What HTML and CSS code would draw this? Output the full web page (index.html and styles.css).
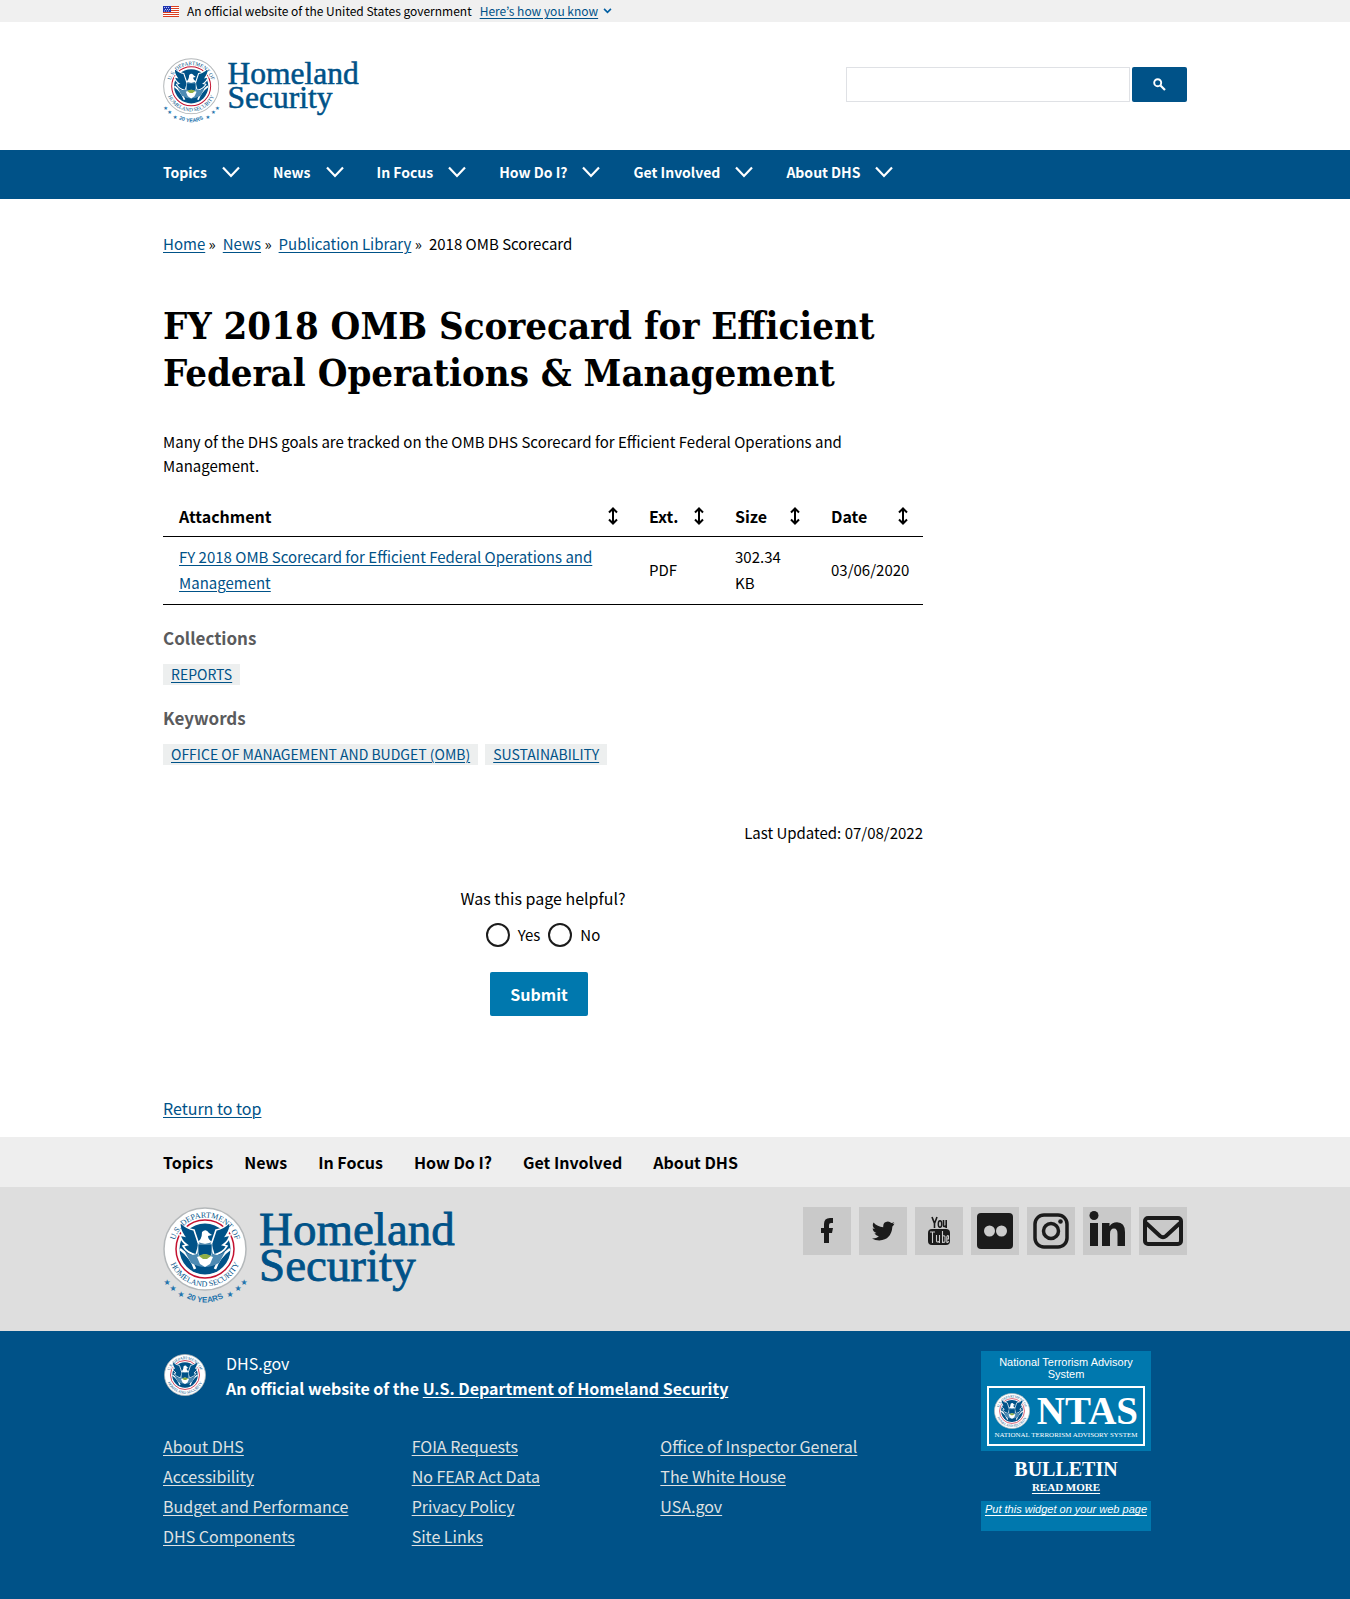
FILE: index.html
```html
<!DOCTYPE html>
<html lang="en">
<head>
<meta charset="utf-8">
<meta name="viewport" content="width=device-width, initial-scale=1">
<title>FY 2018 OMB Scorecard for Efficient Federal Operations &amp; Management | Homeland Security</title>
<link rel="stylesheet" href="styles.css">
</head>
<body id="top">
<svg class="defs" aria-hidden="true">
  <defs>
    <path id="arc-top" d="M10.500 42A31.500 31.500 0 0 1 73.500 42"/>
    <path id="arc-bottom" d="M4.500 42A37.500 37.500 0 0 0 79.500 42"/>
    <path id="arc-years" d="M14 85Q42 106 70 85"/>
    <symbol id="seal" viewBox="0 0 84 84">
      <circle cx="42" cy="42" r="41" fill="#fff" stroke="#b4b8ba" stroke-width="1.500"/>
      <circle cx="42" cy="42" r="29" fill="#fff" stroke="#c41230" stroke-width="1.500"/>
      <circle cx="42" cy="42" r="25.500" fill="#005288"/>
      <path d="M17 15Q24 22 31 23L36 38 33 48Q24 46 20 39L24 38Q18 34 17 28L21 29Q16 22 17 15ZM67 15Q60 22 53 23L48 38 51 48Q60 46 64 39L60 38Q66 34 67 28L63 29Q68 22 67 15Z" fill="#005288" stroke="#fff" stroke-width="1.600"/>
      <path d="M17 42Q28 50 32 62M67 42Q56 50 52 62" fill="none" stroke="#fff" stroke-width="2.500"/>
      <path d="M22 45Q31 51 36 45L48 45Q53 51 62 45L56 56Q49 60 42 60 35 60 28 56Z" fill="#4d8ab3"/>
      <path d="M39 25Q43 21 46 26L49 28 45 29Q45 33 50 35L42 37 34 35Q39 33 39 25Z" fill="#fff"/>
      <path d="M35 37H49V46Q48 51 42 53 36 51 35 46Z" fill="#005288" stroke="#bcd5e3" stroke-width=".8"/>
      <path d="M34 50L42 47 50 50 47 57 42 60 37 57Z" fill="#fff"/>
      <path d="M36 49Q42 45 48 49L44 52H40Z" fill="#8fae45"/>
      <path d="M31 58Q42 65 53 58L42 67Z" fill="#005288"/>
      <g class="seal-text">
        <text><textPath href="#arc-top" startOffset="50%">U.S. DEPARTMENT OF</textPath></text>
        <text><textPath href="#arc-bottom" startOffset="50%">HOMELAND SECURITY</textPath></text>
      </g>
    </symbol>
    <symbol id="dhs-logo" viewBox="0 0 292 98">
      <use href="#seal" width="84" height="84"/>
      <g class="wordmark"><text x="96" y="38">Homeland</text><text x="96" y="74">Security</text></g>
      <g class="stars"><text x="4" y="78">★</text><text x="10" y="84">★</text><text x="18" y="90">★</text><text x="67" y="90">★</text><text x="75" y="84">★</text><text x="81" y="78">★</text></g>
      <text class="years"><textPath href="#arc-years" startOffset="50%">20 YEARS</textPath></text>
    </symbol>
    <symbol id="chevron" viewBox="0 0 18 12"><path d="M1 1.500L9 10L17 1.500" fill="none" stroke="currentColor" stroke-width="2.200"/></symbol>
    <symbol id="sort" viewBox="0 0 10 18"><path d="M5 2V16M1 5.500L5 1.500L9 5.500M1 12.500L5 16.500L9 12.500" fill="none" stroke="currentColor" stroke-width="2"/></symbol>
  </defs>
</svg>

<div class="banner">
  <div class="container banner-inner">
    <svg class="flag" viewBox="0 0 16 11" aria-hidden="true"><path fill="#fff" d="M0 0h16v11H0z"/><path stroke="#db3e1f" d="M0 .5h16M0 2.500h16M0 4.500h16M0 6.500h16M0 8.500h16M0 10.500h16"/><path fill="#1e33b1" d="M0 0h8v6H0z"/><path stroke="#fff" stroke-dasharray="1 1" d="M1 1.500h6M2 3.500h6M1 5h6" stroke-width=".7"/></svg>
    <span>An official website of the United States government</span>
    <a href="#top">Here’s how you know</a>
    <svg class="banner-caret" viewBox="0 0 10 7" aria-hidden="true"><path d="M1 1l4 4 4-4" fill="none" stroke="#005ea2" stroke-width="1.900"/></svg>
  </div>
</div>

<header class="container header">
  <a href="#top" aria-label="U.S. Department of Homeland Security"><svg class="logo" viewBox="0 0 292 98"><use href="#dhs-logo"/></svg></a>
  <form class="search" role="search">
    <input type="search" aria-label="Search">
    <button type="button" aria-label="Search"><svg viewBox="0 0 13 13"><circle cx="4.700" cy="4.700" r="3.500" fill="none" stroke="#fff" stroke-width="1.900"/><path d="M7.500 7.500L12 12" stroke="#fff" stroke-width="2.200"/></svg></button>
  </form>
</header>

<nav class="main-nav" aria-label="Main">
  <div class="container main-nav-inner">
    <button type="button">Topics <svg><use href="#chevron"/></svg></button>
    <button type="button">News <svg><use href="#chevron"/></svg></button>
    <button type="button">In Focus <svg><use href="#chevron"/></svg></button>
    <button type="button">How Do I? <svg><use href="#chevron"/></svg></button>
    <button type="button">Get Involved <svg><use href="#chevron"/></svg></button>
    <button type="button">About DHS <svg><use href="#chevron"/></svg></button>
  </div>
</nav>

<div class="container page">
  <nav class="breadcrumb" aria-label="Breadcrumb">
    <ol>
      <li><a href="#top">Home</a> »</li>
      <li><a href="#top">News</a> »</li>
      <li><a href="#top">Publication Library</a> »</li>
      <li>2018 OMB Scorecard</li>
    </ol>
  </nav>

  <main class="main">
    <h1>FY 2018 OMB Scorecard for Efficient Federal Operations &amp; Management</h1>
    <p class="intro">Many of the DHS goals are tracked on the OMB DHS Scorecard for Efficient Federal Operations and Management.</p>
    <table class="files">
      <colgroup><col class="col-file"><col class="col-ext"><col class="col-size"><col class="col-date"></colgroup>
      <thead>
        <tr>
          <th scope="col"><div>Attachment <svg><use href="#sort"/></svg></div></th>
          <th scope="col"><div>Ext. <svg><use href="#sort"/></svg></div></th>
          <th scope="col"><div>Size <svg><use href="#sort"/></svg></div></th>
          <th scope="col"><div>Date <svg><use href="#sort"/></svg></div></th>
        </tr>
      </thead>
      <tbody>
        <tr>
          <td><a href="#top">FY 2018 OMB Scorecard for Efficient Federal Operations and Management</a></td>
          <td>PDF</td>
          <td>302.34 KB</td>
          <td>03/06/2020</td>
        </tr>
      </tbody>
    </table>
    <section class="tags">
      <h2>Collections</h2>
      <ul><li><a href="#top">REPORTS</a></li></ul>
    </section>
    <section class="tags">
      <h2>Keywords</h2>
      <ul><li><a href="#top">OFFICE OF MANAGEMENT AND BUDGET (OMB)</a></li><li><a href="#top">SUSTAINABILITY</a></li></ul>
    </section>
    <p class="updated">Last Updated: 07/08/2022</p>
    <form class="feedback">
      <fieldset>
        <legend>Was this page helpful?</legend>
        <div class="choices">
          <label><input type="radio" name="helpful"> Yes</label>
          <label><input type="radio" name="helpful"> No</label>
        </div>
      </fieldset>
      <button type="button">Submit</button>
    </form>
  </main>
  <a class="return" href="#top">Return to top</a>
</div>

<footer>
  <nav class="footer-nav" aria-label="Footer">
    <div class="container footer-nav-inner">
      <a href="#top">Topics</a><a href="#top">News</a><a href="#top">In Focus</a><a href="#top">How Do I?</a><a href="#top">Get Involved</a><a href="#top">About DHS</a>
    </div>
  </nav>
  <div class="footer-brand">
    <div class="container footer-brand-inner">
      <svg class="logo logo-large" viewBox="0 0 292 98" role="img" aria-label="U.S. Department of Homeland Security"><use href="#dhs-logo"/></svg>
      <div class="social">
        <a href="#top" aria-label="Facebook"><svg viewBox="0 0 48 48"><path d="M21 36V26h-3v-5h3v-4q0-6 6-6h3v5h-2q-2 0-2 2v3h4l-1 5h-3v10z"/></svg></a>
        <a href="#top" aria-label="Twitter"><svg viewBox="0 0 48 48"><path d="M35.500 16.500q-1 .5-2 .6 1.200-.8 1.700-2.200-1.300.8-2.800 1.100-1.500-1.500-3.500-1.500-4.600.3-4.700 4.700v1q-5.700-.3-9.700-4.700-2 3.800 1.400 6.400-1.200 0-2.200-.6.100 3.700 3.800 4.700-1 .3-2.100.1 1.200 3 4.500 3.300-3 2.300-7 2 3.300 2 7.500 2 12-.5 13-13.800 1.200-1 2.100-3.100z"/></svg></a>
        <a href="#top" aria-label="YouTube"><svg viewBox="0 0 48 48"><path d="M17 10l2.500 6.500V21M22 10l-2.500 6.500M28.500 13v5.500q0 1.700 2.200.5M31.200 13v8" fill="none" stroke="#1b1b1b" stroke-width="1.600"/><ellipse cx="25" cy="17" rx="1.700" ry="3.300" fill="none" stroke="#1b1b1b" stroke-width="1.500"/><rect x="13" y="22" width="22" height="16" rx="4"/><path d="M15 25h5M17.500 25v11M21.500 28v6q.5 2 3 .2V28M24.500 28v8M27.500 24v12M27.500 29q3-1 2.500 2v3q0 2-2.500 1M33.500 34q-.5 2-1.700 1.200V30q.5-2 1.700-1v3h-1.700" fill="none" stroke="#ccc" stroke-width="1.100"/></svg></a>
        <a href="#top" aria-label="Flickr"><svg viewBox="0 0 48 48"><rect x="6" y="6" width="36" height="36" rx="4"/><circle cx="18.500" cy="24" r="5.500" fill="#ccc"/><circle cx="30.500" cy="24" r="5.500" fill="#ccc"/></svg></a>
        <a href="#top" aria-label="Instagram"><svg viewBox="0 0 48 48"><rect x="8" y="8" width="32" height="32" rx="9" fill="none" stroke="#1b1b1b" stroke-width="3.500"/><circle cx="24" cy="24" r="7.500" fill="none" stroke="#1b1b1b" stroke-width="3.500"/><circle cx="33.500" cy="14.500" r="2.300"/></svg></a>
        <a href="#top" aria-label="LinkedIn"><svg viewBox="0 0 48 48"><circle cx="11" cy="8.500" r="4.500"/><path d="M7 16h8v23H7zM19 16h7.500v3.200q2.500-3.900 7.500-3.900 8 0 8 10V39H34.500V27q0-5.500-3.500-5.500-4 0-4 5.500v12h-8z"/></svg></a>
        <a href="#top" aria-label="Email"><svg viewBox="0 0 48 48"><rect x="6" y="11" width="36" height="26" rx="3" fill="none" stroke="#1b1b1b" stroke-width="4"/><path d="M7 16L21 29q3 2.500 6 0L41 16" fill="none" stroke="#1b1b1b" stroke-width="4"/></svg></a>
      </div>
    </div>
  </div>
  <div class="footer-base">
    <div class="container footer-base-inner">
      <div class="footer-info">
        <div class="identity">
          <svg class="seal-small" viewBox="0 0 84 84" aria-hidden="true"><use href="#seal"/></svg>
          <p>DHS.gov<br><strong>An official website of the <a href="#top">U.S. Department of Homeland Security</a></strong></p>
        </div>
        <div class="links">
          <ul>
            <li><a href="#top">About DHS</a></li><li><a href="#top">Accessibility</a></li><li><a href="#top">Budget and Performance</a></li><li><a href="#top">DHS Components</a></li>
          </ul>
          <ul>
            <li><a href="#top">FOIA Requests</a></li><li><a href="#top">No FEAR Act Data</a></li><li><a href="#top">Privacy Policy</a></li><li><a href="#top">Site Links</a></li>
          </ul>
          <ul>
            <li><a href="#top">Office of Inspector General</a></li><li><a href="#top">The White House</a></li><li><a href="#top">USA.gov</a></li>
          </ul>
        </div>
      </div>
      <aside class="ntas">
        <div class="ntas-head">
          <p>National Terrorism Advisory System</p>
          <div class="ntas-box">
            <div class="ntas-title"><svg viewBox="0 0 84 84" aria-hidden="true"><use href="#seal"/></svg><span>NTAS</span></div>
            <div class="ntas-caption">NATIONAL TERRORISM ADVISORY SYSTEM</div>
          </div>
        </div>
        <div class="ntas-bulletin">
          <strong>BULLETIN</strong>
          <a href="#top">READ MORE</a>
        </div>
        <a class="ntas-foot" href="#top">Put this widget on your web page</a>
      </aside>
    </div>
  </div>
</footer>
</body>
</html>
```
FILE: styles.css
```css
* { box-sizing: border-box; }
body {
  margin: 0;
  background: #fff;
  color: #000;
  font: 16px/26px "Noto Sans CJK KR", "Noto Sans", sans-serif;
}
a { color: #005288; text-underline-offset: 2px; text-decoration-thickness: 1px; }
button, input { font: inherit; }
h1, h2, p, ul, ol { margin: 0; padding: 0; }
ul, ol { list-style: none; }
svg { display: block; flex: none; }
.defs { position: absolute; width: 0; height: 0; }
.container { max-width: 1088px; margin: 0 auto; padding: 0 32px; }

.seal-text { font: 8px "Liberation Serif", serif; fill: #005288; text-anchor: middle; }
.wordmark { font: 47px "Liberation Serif", serif; fill: #005288; stroke: #005288; stroke-width: 0.8px; }
.stars { font: 8px "DejaVu Sans", sans-serif; fill: #2474ad; text-anchor: middle; }
.years { font: bold 8px "Liberation Sans", sans-serif; fill: #2474ad; text-anchor: middle; }

.banner { background: #f0f0f0; }
.banner-inner { display: flex; align-items: center; gap: 8px; font-size: 12px; line-height: 22px; }
.banner-caret { width: 9px; height: 6px; margin-left: -3px; }
.flag { width: 16px; height: 11px; }

.header { display: flex; justify-content: space-between; align-items: flex-start; padding-top: 36px; padding-bottom: 26px; }
.logo { width: 196px; height: 66px; }
.search { display: flex; gap: 2px; padding-top: 9px; }
.search input { width: 284px; height: 35px; padding: 0 8px; border: 1px solid #dfe1e5; border-radius: 0; }
.search button { width: 55px; height: 35px; padding: 0; border: 0; border-radius: 2px; background: #005288; }
.search button svg { width: 13px; height: 13px; margin: 0 auto; }

.main-nav { background: #005288; }
.main-nav-inner { display: flex; gap: 33px; }
.main-nav button {
  display: flex;
  align-items: center;
  gap: 15px;
  padding: 9px 0 14px;
  border: 0;
  background: none;
  color: #fff;
  font-size: 14px;
  font-weight: bold;
}
.main-nav svg { width: 18px; height: 12px; }

.page { padding-top: 32px; padding-bottom: 16px; }
.breadcrumb ol { display: flex; gap: 7px; font-size: 15px; }
.main { max-width: 760px; padding-top: 45px; }
h1 { font: bold 38px/47px "DejaVu Serif Condensed", "DejaVu Serif", serif; }
.intro { padding: 34px 0 17px; font-size: 15px; line-height: 24px; }

.files { width: 100%; border-collapse: collapse; table-layout: fixed; text-align: left; }
.files th { padding: 8px 15px 7px 16px; border-bottom: 1px solid #000; }
.files td { padding: 7px 15px 8px 16px; border-bottom: 1px solid #000; font-size: 15px; }
.files th div { display: flex; align-items: center; justify-content: space-between; }
.files svg { width: 10px; height: 18px; }
.col-ext { width: 86px; }
.col-size { width: 96px; }
.col-date { width: 108px; }

.tags { padding-top: 20px; }
.tags h2 { color: #5a5b5d; font-size: 17px; line-height: 26px; }
.tags ul { display: flex; gap: 7px; padding-top: 13px; }
.tags li { padding: 0 8px; background: #edefef; font-size: 14px; line-height: 21px; }

.updated { padding-top: 55px; text-align: right; font-size: 15px; }
.feedback { display: flex; flex-direction: column; align-items: center; padding-top: 39px; }
.feedback fieldset { margin: 0; padding: 0; border: 0; }
.feedback legend { padding: 0; }
.choices { display: flex; justify-content: center; gap: 8px; padding-top: 11px; font-size: 15px; }
.choices label { display: flex; align-items: center; gap: 8px; }
.choices input { appearance: none; width: 24px; height: 24px; margin: 0; border: 2px solid #1b1b1b; border-radius: 50%; background: #fff; }
.feedback button { margin: 24px 8px 0 0; padding: 9px 20px; border: 0; border-radius: 2px; background: #0078ae; color: #fff; font-weight: bold; }
.return { display: inline-block; margin-top: 79px; }

.footer-nav { background: #eee; }
.footer-nav-inner { display: flex; gap: 31px; padding-top: 12px; padding-bottom: 12px; }
.footer-nav a { color: #000; font-weight: bold; text-decoration: none; }
.footer-brand { background: #dedede; }
.footer-brand-inner { display: flex; justify-content: space-between; align-items: flex-start; padding-top: 20px; padding-bottom: 26px; }
.logo-large { width: 292px; height: 98px; }
.social { display: flex; gap: 8px; }
.social a { display: block; background: #c9c9c9; }
.social svg { width: 48px; height: 48px; fill: #1b1b1b; }

.footer-base { background: #005288; color: #fff; }
.footer-base a { color: inherit; }
.footer-base-inner { display: flex; justify-content: space-between; padding-top: 20px; padding-bottom: 48px; }
.footer-info { flex: 1; max-width: 746px; }
.identity { display: flex; gap: 19px; line-height: 25px; }
.seal-small { width: 44px; height: 44px; margin-top: 2px; padding: 1px; }
.links { display: grid; grid-template-columns: repeat(3, 1fr); padding-top: 30px; line-height: 30px; }
.footer-base .links a { color: #dfe1e2; }

.ntas { width: 170px; margin-right: 36px; text-align: center; font: 11px/12px "Liberation Sans", Arial, sans-serif; }
.ntas-head { padding: 5px 6px; background: #0078ae; }
.ntas-head p { padding: 0 6px; }
.ntas-box { margin-top: 6px; border: 2px solid #fff; height: 60px; padding: 4px 5px; font-family: "Liberation Serif", serif; }
.ntas-title { display: flex; justify-content: space-between; align-items: center; font-size: 39px; font-weight: bold; line-height: 38px; }
.ntas-title svg { width: 36px; height: 36px; }
.ntas-caption { font-size: 7px; line-height: 10px; white-space: nowrap; }
.ntas-bulletin { display: flex; flex-direction: column; align-items: center; padding: 6px 0 8px; font-family: "Liberation Serif", serif; font-weight: bold; }
.ntas-bulletin strong { font-size: 20px; line-height: 24px; }
.ntas-bulletin a { font-size: 11px; }
.ntas-foot { display: block; height: 30px; padding-top: 2px; background: #0078ae; font-style: italic; white-space: nowrap; }
```
